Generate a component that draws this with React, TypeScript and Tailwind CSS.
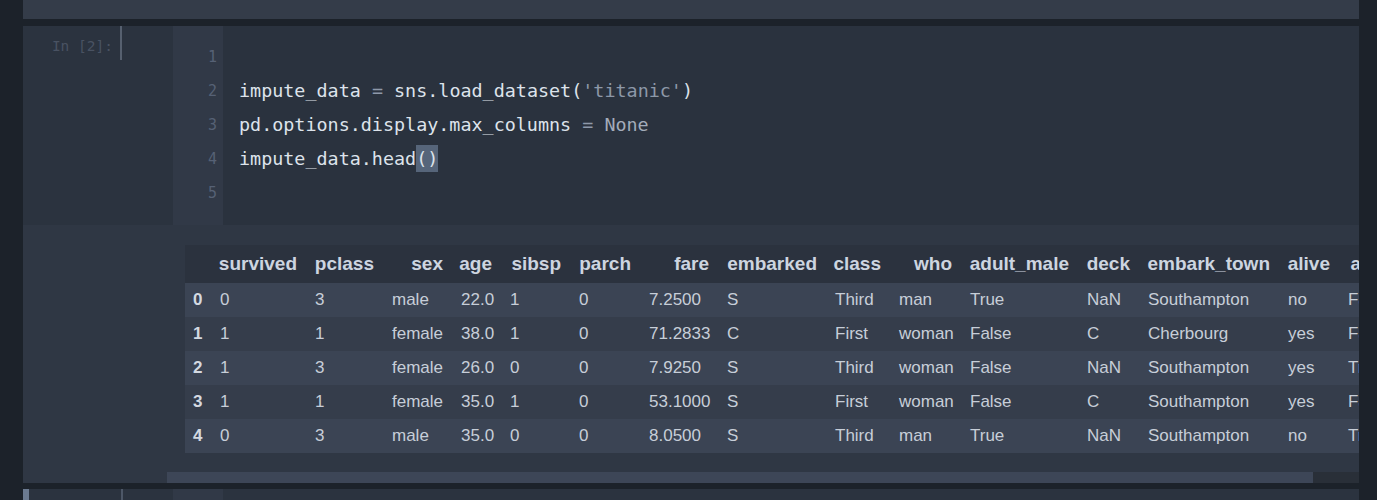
import React from 'react';

const columns = [
  { name: '', cls: 'w-[26px]' },
  { name: 'survived', cls: 'w-[95px]' },
  { name: 'pclass', cls: 'w-[77px]' },
  { name: 'sex', cls: 'w-[69px]' },
  { name: 'age', cls: 'w-[49px]' },
  { name: 'sibsp', cls: 'w-[69px]' },
  { name: 'parch', cls: 'w-[70px]' },
  { name: 'fare', cls: 'w-[78px]' },
  { name: 'embarked', cls: 'w-[108px]' },
  { name: 'class', cls: 'w-[64px]' },
  { name: 'who', cls: 'w-[71px]' },
  { name: 'adult_male', cls: 'w-[117px]' },
  { name: 'deck', cls: 'w-[61px]' },
  { name: 'embark_town', cls: 'w-[140px]' },
  { name: 'alive', cls: 'w-[60px]' },
  { name: 'alone', cls: 'w-[70px]' },
];

const rows = [
  ['0', '0', '3', 'male', '22.0', '1', '0', '7.2500', 'S', 'Third', 'man', 'True', 'NaN', 'Southampton', 'no', 'False'],
  ['1', '1', '1', 'female', '38.0', '1', '0', '71.2833', 'C', 'First', 'woman', 'False', 'C', 'Cherbourg', 'yes', 'False'],
  ['2', '1', '3', 'female', '26.0', '0', '0', '7.9250', 'S', 'Third', 'woman', 'False', 'NaN', 'Southampton', 'yes', 'True'],
  ['3', '1', '1', 'female', '35.0', '1', '0', '53.1000', 'S', 'First', 'woman', 'False', 'C', 'Southampton', 'yes', 'False'],
  ['4', '0', '3', 'male', '35.0', '0', '0', '8.0500', 'S', 'Third', 'man', 'True', 'NaN', 'Southampton', 'no', 'True'],
];

const Eq = () => <span className="text-[#8e99a9]">=</span>;

const codeLines: React.ReactNode[] = [
  '',
  <>
    impute_data <Eq /> sns.load_dataset(<span className="text-[#8d98a8]">'titanic'</span>)
  </>,
  <>
    pd.options.display.max_columns <Eq /> <span className="text-[#a3acba]">None</span>
  </>,
  <>
    impute_data.head<span className="bg-[#56657a] py-[3px]">()</span>
  </>,
  '',
];

const CodeCell = () => (
  <div className="flex h-[199px]">
    {/* prompt */}
    <div className="w-[150px] flex">
      <div
        className="w-[97px] pr-[7px] pt-[10px] text-right text-[14.5px] leading-[20px] text-[#495262]"
        style={{ fontFamily: '"DejaVu Sans Mono", monospace' }}
      >
        In [2]:
      </div>
      <div className="w-[2px] h-[34px] bg-[#56606f]" />
    </div>

    {/* editor */}
    <div
      className="flex-1 flex bg-[#2a323e]"
      style={{ fontFamily: '"DejaVu Sans Mono", monospace' }}
    >
      <div className="w-[50px] bg-[#313947] pt-[14px] pr-[6px] text-right text-[15px] text-[#566175]">
        {codeLines.map((_, i) => (
          <div key={i} className="h-[34px] leading-[34px]">
            {i + 1}
          </div>
        ))}
      </div>
      <div className="pl-[16px] pt-[14px] text-[18.4px] text-[#dde3eb] whitespace-pre">
        {codeLines.map((line, i) => (
          <div key={i} className="h-[34px] leading-[34px]">
            {line}
          </div>
        ))}
      </div>
    </div>
  </div>
);

const OutputCell = () => (
  <div className="flex h-[258px] bg-[#2f3744]">
    <div className="w-[144px]" />
    <div className="flex-1 min-w-0 flex flex-col overflow-hidden">
      <div
        className="pt-[20px] pl-[18px]"
        style={{ fontFamily: '"Liberation Sans", Arial, sans-serif' }}
      >
        <table className="table-fixed border-collapse w-[1224px]">
          <colgroup>
            {columns.map((c, i) => (
              <col key={i} className={c.cls} />
            ))}
          </colgroup>
          <thead>
            <tr className="h-[38px] bg-[#2b323e]">
              {columns.map((c, i) => (
                <th
                  key={i}
                  className="p-0 pr-[9px] text-right text-[19px] font-bold text-[#cdd5e0] whitespace-nowrap"
                >
                  {c.name}
                </th>
              ))}
            </tr>
          </thead>
          <tbody>
            {rows.map((r, ri) => (
              <tr
                key={ri}
                className={ri % 2 === 0 ? 'h-[34px] bg-[#3b4454]' : 'h-[34px] bg-[#353d4b]'}
              >
                {r.map((v, ci) =>
                  ci === 0 ? (
                    <th
                      key={ci}
                      className="p-0 pl-[8px] text-left text-[17px] font-bold text-[#d3d9e1]"
                    >
                      {v}
                    </th>
                  ) : (
                    <td
                      key={ci}
                      className="p-0 pl-[9px] text-left text-[17px] text-[#c7ced8] whitespace-nowrap overflow-hidden"
                    >
                      {v}
                    </td>
                  )
                )}
              </tr>
            ))}
          </tbody>
        </table>
      </div>
      <div className="flex-1" />
      {/* horizontal scrollbar */}
      <div className="flex h-[11px]">
        <div className="w-[1146px] bg-[#3d4657]" />
        <div className="flex-1 bg-[#292f38]" />
      </div>
    </div>
  </div>
);

export default function App() {
  return (
    <div className="w-[1377px] h-[500px] overflow-hidden bg-[#1c222a] pl-[23px] pr-[18px]">
      {/* previous cell tail */}
      <div className="h-[19px] bg-[#343c49]" />
      <div className="h-[7px]" />

      {/* active cell */}
      <div className="bg-[#2b333f]">
        <CodeCell />
        <OutputCell />
      </div>

      <div className="h-[6px]" />

      {/* next cell */}
      <div className="flex h-[20px] bg-[#2b333f]">
        <div className="w-[6px] bg-[#6b7a90]" />
        <div className="w-[92px]" />
        <div className="w-[2px] bg-[#4d5767]" />
        <div className="w-[50px]" />
        <div className="w-[50px] bg-[#313947]" />
      </div>
    </div>
  );
}
